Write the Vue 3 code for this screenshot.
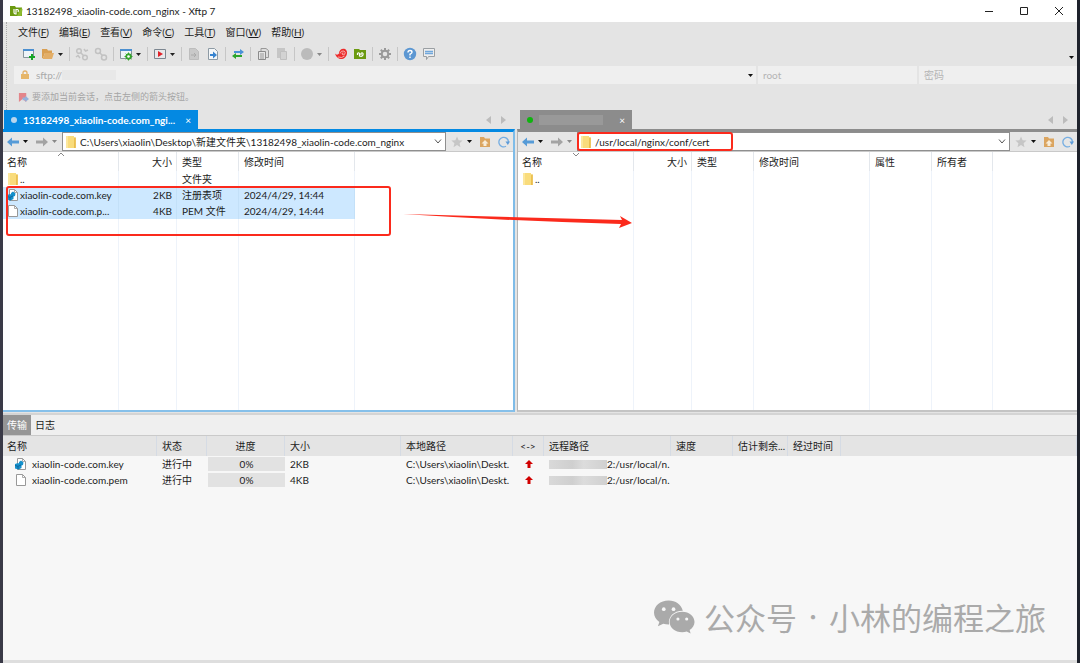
<script setup>
const menus = [
  ['文件', 'F'], ['编辑', 'E'], ['查看', 'V'], ['命令', 'C'],
  ['工具', 'T'], ['窗口', 'W'], ['帮助', 'H'],
]

const tools = [
  'new', 'open', 'caret', 'sep', 'link', 'unlink', 'sep', 'props', 'caret', 'sep',
  'run', 'caret', 'sep', 'doc', 'docGo', 'sep', 'swap', 'sep', 'copy', 'paste', 'sep',
  'globe', 'caretOff', 'sep', 'xshell', 'xftp', 'sep', 'gear', 'sep', 'help', 'chat',
]

const toolLabels = {
  new: '新建', open: '打开', caret: '更多', caretOff: '更多', link: '连接', unlink: '断开',
  props: '属性', run: '运行', doc: '文件', docGo: '传输文件', swap: '同步', copy: '复制',
  paste: '粘贴', globe: '编码', xshell: 'Xshell', xftp: 'Xftp', gear: '选项', help: '帮助', chat: '反馈',
}

const panes = [
  {
    side: 'local',
    title: '13182498_xiaolin-code.com_ngi...',
    path: 'C:\\Users\\xiaolin\\Desktop\\新建文件夹\\13182498_xiaolin-code.com_nginx',
    columns: ['名称', '大小', '类型', '修改时间'],
    rows: [
      { icon: 'folder', cells: ['..', '', '文件夹', ''] },
      { icon: 'key', selected: true, cells: ['xiaolin-code.com.key', '2KB', '注册表项', '2024/4/29, 14:44'] },
      { icon: 'file', selected: true, cells: ['xiaolin-code.com.p...', '4KB', 'PEM 文件', '2024/4/29, 14:44'] },
    ],
  },
  {
    side: 'remote',
    title: '',
    path: '/usr/local/nginx/conf/cert',
    columns: ['名称', '大小', '类型', '修改时间', '属性', '所有者'],
    rows: [{ icon: 'folder', cells: ['..', '', '', '', '', ''] }],
  },
]

const transferColumns = ['名称', '状态', '进度', '大小', '本地路径', '<->', '远程路径', '速度', '估计剩余...', '经过时间']
const transfers = [
  { icon: 'key', name: 'xiaolin-code.com.key', size: '2KB' },
  { icon: 'file', name: 'xiaolin-code.com.pem', size: '4KB' },
]
</script>

<template>
  <div class="desktop">
    <svg class="defs" aria-hidden="true">
      <symbol id="i-folder" viewBox="0 0 12 14">
        <path d="M1 1h8v1.5h1.5V13H1z" fill="#f9dc7c" />
        <path d="M9.2 2.5h1.6V13H9z" fill="#e9bd4d" />
        <path d="M1 1h2v12H1z" fill="#fce79d" />
      </symbol>
      <symbol id="i-file" viewBox="0 0 12 14">
        <path d="M1.5 1.5h6l3 3v8h-9z" fill="#fff" stroke="#989898" />
        <path d="M7.5 1.5v3h3" fill="none" stroke="#989898" stroke-width=".8" />
      </symbol>
      <symbol id="i-key" viewBox="0 0 12 14">
        <path d="M2.5 1.5h5l3 3v8h-8z" fill="#fff" stroke="#989898" />
        <path d="M7.5 1.5v3h3" fill="none" stroke="#989898" stroke-width=".8" />
        <path d="M0 7l3-1 1 .5V5l2-1.500 2.500 2L8 8 6.500 8.500 6.500 11l-3 1.500-3.500-1z" fill="#1591cc" />
        <path d="M0 8.500l3 .8 3-1.300M3 9.300v3" stroke="#0b5c94" stroke-width=".8" fill="none" />
      </symbol>
    </svg>

    <main class="window">
      <header class="titlebar">
        <svg class="app-icon" viewBox="0 0 14 12">
          <path d="M1 1h5l1 1.500h6V11H1z" fill="#6b9a10" />
          <path d="M12 3l1.500 1-1 7H8z" fill="#8dbb2f" />
          <path d="M5 4v3.500q0 1.500 1.500 1.500H7V4.500h1.500Q10 5 9 7" fill="none" stroke="#fff" stroke-width="1.200" />
        </svg>
        <h1>13182498_xiaolin-code.com_nginx - Xftp 7</h1>
        <div class="caption">
          <button aria-label="最小化"><svg viewBox="0 0 10 10"><path d="M1 5.500h8" /></svg></button>
          <button aria-label="最大化"><svg viewBox="0 0 10 10"><path d="M1.500 1.500h7v7h-7z" /></svg></button>
          <button aria-label="关闭"><svg viewBox="0 0 10 10"><path d="M1 1l8 8M9 1l-8 8" /></svg></button>
        </div>
      </header>

      <section class="chrome">
        <nav class="menubar">
          <button v-for="m in menus" :key="m[1]">{{ m[0] }}(<u>{{ m[1] }}</u>)</button>
        </nav>

        <div class="toolbar">
          <template v-for="(t, i) in tools" :key="i">
            <span v-if="t === 'sep'" class="sep"></span>
            <button v-else :class="t.startsWith('caret') ? 'drop' : 'tool'" :aria-label="toolLabels[t]">
              <svg v-if="t.startsWith('caret')" viewBox="0 0 5 3"><path d="M0 0h5L2.500 3z" :fill="t === 'caret' ? '#222' : '#888'" /></svg>
              <svg v-else-if="t === 'new'" viewBox="0 0 14 14">
                <path d="M1.500 2.500h10v8h-10z" fill="#eef4f8" stroke="#87949c" /><path d="M1 2h11v2H1z" fill="#4b8fd0" />
                <path d="M10 7v6M7 10h6" stroke="#16a524" stroke-width="2" />
              </svg>
              <svg v-else-if="t === 'open'" viewBox="0 0 14 14"><path d="M1 2h5l1 1.500h4V6H4l-2 5-1 0z" fill="#d99f52" /><path d="M4 6h9l-2 6H1.500z" fill="#e3ae67" /></svg>
              <svg v-else-if="t === 'link'" viewBox="0 0 14 14" fill="none" stroke="#c2c2c2" stroke-width="1.500">
                <circle cx="4" cy="4" r="2.300" /><circle cx="10" cy="10.500" r="2.300" /><path d="M5.500 5.500l3 3M9 2l1.500 2L13 3M1 10l2-1.500L5 11" />
              </svg>
              <svg v-else-if="t === 'unlink'" viewBox="0 0 14 14" fill="none" stroke="#c2c2c2" stroke-width="1.500">
                <circle cx="4" cy="4" r="2.500" /><circle cx="10" cy="10.500" r="2.500" /><path d="M5.500 5.500l3 3" />
              </svg>
              <svg v-else-if="t === 'props'" viewBox="0 0 14 14">
                <path d="M1.500 2.500h11v9h-11z" fill="#eef4f8" stroke="#87949c" /><path d="M1 2h12v2H1z" fill="#4b8fd0" />
                <circle cx="9.500" cy="9.500" r="2.300" fill="#eee" stroke="#35a52c" stroke-width="1.700" />
                <path d="M9.500 5.500v8M5.500 9.500h8M6.700 6.700l5.600 5.600M12.300 6.700l-5.600 5.600" stroke="#35a52c" /><circle cx="9.500" cy="9.500" r="1.300" fill="#fff" />
              </svg>
              <svg v-else-if="t === 'run'" viewBox="0 0 14 14"><path d="M1.500 2.500h11v9h-11z" fill="#e8e8ea" stroke="#7c8690" /><path d="M5 4l5 3-5 3z" fill="#e0222a" /></svg>
              <svg v-else-if="t === 'doc'" viewBox="0 0 14 14"><path d="M2.500 1.500h6l3 3v8h-9z" fill="#c9c9c9" stroke="#bdbdbd" /><path d="M4 8h5M7 6l2 2-2 2" stroke="#aaa" fill="none" /></svg>
              <svg v-else-if="t === 'docGo'" viewBox="0 0 14 14"><path d="M2.500 1.500h6l3 3v8h-9z" fill="#f3f6f8" stroke="#8d9aa4" /><path d="M4 7h3V4.500L11 8l-4 3.500V9H4z" fill="#3683cf" /></svg>
              <svg v-else-if="t === 'swap'" viewBox="0 0 14 14"><path d="M3 4h6V2l4 3-4 3V6H3z" fill="#4a92d8" /><path d="M11 8H5V6L1 9l4 3v-2h6z" fill="#2ba52c" /></svg>
              <svg v-else-if="t === 'copy'" viewBox="0 0 14 14"><path d="M5 1.500h5l2.500 2v7H5z" fill="#ddd" stroke="#999" /><path d="M2.500 4.500h7v8h-7z" fill="#e5e5e5" stroke="#8b8b8b" /><path d="M4 7h4M4 9h4M4 11h4" stroke="#999" /></svg>
              <svg v-else-if="t === 'paste'" viewBox="0 0 14 14"><path d="M2 1h8v10H2z" fill="#c6c6c6" /><path d="M5.500 4.500h6v8h-6z" fill="#d3d3d3" stroke="#c0c0c0" /></svg>
              <svg v-else-if="t === 'globe'" viewBox="0 0 14 14"><circle cx="7" cy="7" r="6" fill="#bbb" /></svg>
              <svg v-else-if="t === 'xshell'" viewBox="0 0 14 14">
                <path d="M1 6.500c1 1.500 3 1.500 4 0C5 3 8 1 11 2 14 3.500 13.500 8.500 11 10.500 7.500 13.500 2.500 12 1 6.500z" fill="#ed2b2b" />
                <path d="M9.500 6q-1.500-.5-1.500 1 1 1.500 2.700.3 1.300-2-.7-3.300-3-.8-4 2.500M4 10q4 1.500 6.500-1" stroke="#f7c8c4" stroke-width=".8" fill="none" />
              </svg>
              <svg v-else-if="t === 'xftp'" viewBox="0 0 14 14"><path d="M1 2h5l1 1h6v9H1z" fill="#6b9a10" /><path d="M4.500 8V6.500q1-1.500 2 0V9q2.500 1 3.500-1V6.500q-1-1.500-2 0V8" fill="none" stroke="#fff" stroke-width="1.200" /></svg>
              <svg v-else-if="t === 'gear'" viewBox="0 0 14 14">
                <path d="M7 1v12M1 7h12M2.800 2.800l8.400 8.400M11.200 2.800l-8.400 8.400" stroke="#999" stroke-width="2" /><circle cx="7" cy="7" r="3.300" fill="#e4e4e4" stroke="#999" stroke-width="2" />
              </svg>
              <svg v-else-if="t === 'help'" viewBox="0 0 14 14"><circle cx="7" cy="7" r="6.200" fill="#5c97d2" /><path d="M5 5.500q0-2 2-2t2 1.700q0 1-2 2V8.500M7 9.500v1.500" fill="none" stroke="#fff" stroke-width="1.400" /></svg>
              <svg v-else viewBox="0 0 14 14"><path d="M1.500 1.500h11v8h-6l-2 3v-3h-3z" fill="#eee" stroke="#9a9fa3" /><path d="M3 4.500h8M3 6.500h8" stroke="#70a7dc" stroke-width="1.400" /></svg>
            </button>
          </template>
          <button class="drop overflow" aria-label="工具栏选项"><svg viewBox="0 0 5 3"><path d="M0 0h5L2.500 3z" fill="#111" /></svg></button>
        </div>

        <form class="address" @submit.prevent>
          <div class="host">
            <svg class="lock" viewBox="0 0 10 10"><path d="M3 5V3q0-2 2-2t2 2v2" fill="none" stroke="#e2b069" stroke-width="1.300" /><path d="M1 4h8v5H1z" fill="#e6b568" /></svg>
            <input aria-label="主机" value="sftp://" />
            <i class="smudge host-smudge"></i>
            <button class="drop" aria-label="主机列表"><svg viewBox="0 0 5 3"><path d="M0 0h5L2.500 3z" fill="#111" /></svg></button>
          </div>
          <input class="user" aria-label="用户名" placeholder="root" />
          <input class="pass" type="password" aria-label="密码" placeholder="密码" />
        </form>

        <p class="hint">
          <svg viewBox="0 0 12 12"><path d="M1 1h8v10L5 7.500 1 11z" fill="#e3858a" /><path d="M5 6h3V4l4 3.500L8 11V9H5z" fill="#93b3dd" /></svg>
          要添加当前会话，点击左侧的箭头按钮。
        </p>
      </section>

      <section class="panes">
        <article v-for="p in panes" :key="p.side" class="pane" :class="p.side">
          <div class="tabs">
            <div class="tab">
              <i class="dot"></i>
              <span v-if="p.title" class="tab-title">{{ p.title }}</span>
              <i v-else class="smudge tab-smudge"></i>
              <button aria-label="关闭标签">×</button>
            </div>
            <div class="scroll">
              <button aria-label="向左"><svg viewBox="0 0 5 8"><path d="M5 0v8L0 4z" /></svg></button>
              <button aria-label="向右"><svg viewBox="0 0 5 8"><path d="M0 0v8l5-4z" /></svg></button>
            </div>
          </div>

          <div class="body">
            <div class="nav">
              <button class="arrow" aria-label="后退"><svg viewBox="0 0 12 10"><path d="M0 5l5-4.500v3h7v3H5v3z" fill="#569bd7" /></svg></button>
              <button class="drop" aria-label="后退历史"><svg viewBox="0 0 5 3"><path d="M0 0h5L2.500 3z" fill="#111" /></svg></button>
              <button class="arrow" aria-label="前进"><svg viewBox="0 0 12 10"><path d="M12 5L7 .5v3H0v3h7v3z" fill="#a3a3a3" /></svg></button>
              <button class="drop" aria-label="前进历史"><svg viewBox="0 0 5 3"><path d="M0 0h5L2.500 3z" fill="#888" /></svg></button>
              <div class="path">
                <svg class="ficon"><use href="#i-folder" /></svg>
                <input :value="p.path" aria-label="路径" />
                <button aria-label="路径列表"><svg viewBox="0 0 8 5"><path d="M1 .5l3 3.500L7 .5" fill="none" stroke="#555" /></svg></button>
                <i v-if="p.side === 'remote'" class="mark path-mark"></i>
              </div>
              <div class="nav-end">
                <button aria-label="收藏"><svg viewBox="0 0 12 12"><path d="M6 .5l1.600 3.700 4 .3-3 2.700.9 4L6 9l-3.500 2.200.9-4-3-2.700 4-.3z" fill="#c6c6c6" /></svg></button>
                <button class="drop" aria-label="收藏列表"><svg viewBox="0 0 5 3"><path d="M0 0h5L2.500 3z" fill="#111" /></svg></button>
                <button class="up" aria-label="上级目录"><svg viewBox="0 0 12 12"><path d="M1 1h4l1 1.500h5V11H1z" fill="#dba560" /><path d="M6 4l3.500 3.500H7.500V10h-3V7.500h-2z" fill="#f8ecd8" /></svg></button>
                <button aria-label="刷新"><svg viewBox="0 0 12 12"><path d="M8 10.300A4.800 4.800 0 1 1 10.500 6" fill="none" stroke="#76aee2" stroke-width="1.300" /><path d="M7.500 5.500h4.500L9.800 9z" fill="#5d9bd8" /></svg></button>
              </div>
            </div>

            <div class="list">
              <table :class="p.side">
                <colgroup><col v-for="(c, i) in p.columns" :key="c" :class="'c' + i" /></colgroup>
                <thead><tr><th v-for="c in p.columns" :key="c">{{ c }}</th></tr></thead>
                <tbody>
                  <tr v-for="r in p.rows" :key="r.cells[0]" :class="{ selected: r.selected }">
                    <td v-for="(c, i) in r.cells" :key="i">
                      <span v-if="i === 0" class="name"><svg class="ficon"><use :href="'#i-' + r.icon" /></svg>{{ c }}</span>
                      <template v-else>{{ c }}</template>
                    </td>
                  </tr>
                  <tr class="rest"><td v-for="c in p.columns" :key="c"></td></tr>
                </tbody>
              </table>
              <svg class="sort" viewBox="0 0 8 5"><path :d="p.side === 'local' ? 'M1 4l3-3 3 3' : 'M1 1l3 3 3-3'" /></svg>
              <i v-if="p.side === 'local'" class="mark files-mark"></i>
            </div>
          </div>
        </article>
        <svg class="pointer" viewBox="0 0 230 20"><path d="M0 4l219 6-2-4 12 7-13 5 2-4q-110-3-218-10z" fill="#fb2a1c" /></svg>
      </section>

      <section class="transfer">
        <div class="switch"><button class="on">传输</button><button>日志</button></div>
        <table>
          <colgroup><col v-for="(c, i) in transferColumns" :key="c" :class="'t' + i" /><col /></colgroup>
          <thead><tr><th v-for="c in transferColumns" :key="c">{{ c }}</th><th></th></tr></thead>
          <tbody>
            <tr v-for="t in transfers" :key="t.name">
              <td><span class="name"><svg class="ficon"><use :href="'#i-' + t.icon" /></svg>{{ t.name }}</span></td>
              <td>进行中</td>
              <td class="bar"><div>0%</div></td>
              <td>{{ t.size }}</td>
              <td>C:\Users\xiaolin\Deskt.</td>
              <td class="dir"><svg viewBox="0 0 8 8"><path d="M4 0l4 4H5.500v4h-3V4H0z" fill="#d10000" /></svg></td>
              <td><span class="remote-path"><i class="smudge"></i>2:/usr/local/n.</span></td>
              <td></td><td></td><td></td><td></td>
            </tr>
          </tbody>
        </table>
        <div class="watermark">
          <svg viewBox="0 0 42 34">
            <path d="M15 0C6.500 0 0 5.500 0 12.500c0 4 2 7.300 5.500 9.500L4 26.500l5.500-2.700q3 .9 6 .8C14 17 20 10.500 29.500 10.500 28 4 22 0 15 0z" fill="#aaa" />
            <path d="M29 11.500c-7.500 0-13 4.700-13 10.500s5.500 10.500 13 10.500q2.300 0 4.500-.7l4 2-1-3.500c3-2 5-5 5-8.300 0-5.800-5.500-10.500-12.500-10.500z" fill="#aaa" />
            <g fill="#f7f7f7"><circle cx="10" cy="9" r="1.900" /><circle cx="20" cy="9" r="1.900" /><circle cx="24.500" cy="19" r="1.600" /><circle cx="33.500" cy="19" r="1.600" /></g>
          </svg>
          <span>公众号</span><span class="mid">·</span><span>小林的编程之旅</span>
        </div>
      </section>
    </main>
  </div>
</template>

<style>
body { margin: 0; background: #3a3a47; }
</style>

<style scoped>
* { box-sizing: border-box; }
.desktop {
  min-height: 100vh; display: flex; padding: 0 3px;
  background: linear-gradient(90deg, #3a3a47 50%, #1e222c 50%);
  font: 10px/14px Lato, "Noto Sans CJK SC", sans-serif; color: #1c1c1c;
}
.defs { position: absolute; width: 0; height: 0; }
button { border: 0; padding: 0; margin: 0; background: none; font: inherit; color: inherit; display: flex; align-items: center; justify-content: center; }
input { border: 0; padding: 0; margin: 0; background: none; font: inherit; color: inherit; min-width: 0; outline: 0; }
svg { display: block; }
.window { flex: 1; min-width: 0; display: flex; flex-direction: column; background: #e4e4e4; border-bottom: 3px solid #dedede; }

.titlebar { height: 22px; background: #fff; display: flex; align-items: center; padding-left: 6px; }
.app-icon { width: 14px; height: 12px; margin-right: 3px; }
h1 { margin: 0; font-size: 10px; font-weight: 400; }
.caption { margin-left: auto; display: flex; padding-right: 1px; }
.caption button { width: 35px; height: 20px; }
.caption svg { width: 10px; height: 10px; fill: none; stroke: #222; }

.chrome { margin-left: 3px; border-left: 1px dotted #aaa; padding-left: 7px; }
.menubar { display: flex; height: 20px; gap: 10px; padding-left: 4px; }
.toolbar { display: flex; height: 24px; align-items: center; padding-left: 5px; }
.tool { width: 19px; height: 20px; }
.tool svg { width: 14px; height: 14px; }
.drop { width: 9px; height: 18px; flex: none; justify-content: flex-start; padding-left: 1px; }
.drop svg { width: 5px; height: 3px; }
.sep { width: 6px; height: 14px; background: linear-gradient(#c6c6c6, #c6c6c6) center / 1px 100% no-repeat; }
.overflow { margin-left: auto; align-self: flex-end; }

.address { display: flex; height: 18px; gap: 2px; color: #aaa; }
.address > * { background: #efefef; }
.host { flex: 1; display: flex; align-items: center; padding-left: 6px; }
.lock { width: 10px; height: 10px; margin-right: 6px; }
.host input { width: 26px; }
.host .drop { margin-left: auto; }
.user { width: 159px; padding-left: 5px; }
.pass { width: 158px; padding-left: 5px; }
input::placeholder { color: #b4b4b4; opacity: 1; }
.smudge { display: block; background: linear-gradient(90deg, #d9d9d9, #cfcfcf 40%, #dcdcdc 60%, #d0d0d0); }
.host-smudge { width: 54px; height: 10px; background: #e8e8e8; }
.hint { margin: 0; height: 26px; display: flex; align-items: center; gap: 3px; padding-left: 4px; color: #a5a5a5; font-size: 9px; }
.hint svg { width: 11px; height: 11px; }

.panes { flex: 1; display: grid; grid-template-columns: 512fr 560fr; gap: 2px; position: relative; padding-bottom: 1px; }
.pane { display: flex; flex-direction: column; min-width: 0; }
.tabs { height: 19px; display: flex; padding-left: 1px; }
.remote .tabs { padding-left: 3px; }
.tab { display: flex; align-items: center; width: 194px; background: #0489e2; color: #fff; font-weight: 700; padding: 0 7px; }
.tab-title { white-space: nowrap; }
.remote .tab { width: 112px; background: #8c8c8c; }
.dot { width: 6px; height: 6px; border-radius: 50%; background: #b9d6ee; margin-right: 6px; flex: none; }
.remote .dot { background: #0eb40e; }
.tab-smudge { width: 64px; height: 10px; background: #999; }
.tab button { margin-left: auto; font-weight: 400; }
.scroll { margin-left: auto; display: flex; align-items: center; gap: 10px; padding-right: 9px; }
.scroll svg { width: 5px; height: 8px; fill: #bcbcbc; }
.body { flex: 1; display: flex; flex-direction: column; border-top: 3px solid #0489e2; border-right: 2px solid #7fbce8; border-bottom: 2px solid #86c0ea; }
.remote .body { border-top-color: #8c8c8c; border-right: 0; border-left: 1px solid #b5b5b5; border-bottom-color: #c4c4c4; }
.nav { height: 20px; display: flex; align-items: center; background: #e6e6e6; padding: 0 3px 0 4px; border-bottom: 1px solid #c9c9c9; }
.arrow { width: 15px; justify-content: flex-start; }
.arrow svg { width: 12px; height: 10px; }
.nav > .drop { width: 14px; }
.nav > .drop:nth-child(4) { width: 11px; }
.path { flex: 1; min-width: 0; height: 19px; position: relative; display: flex; align-items: center; background: #fff; border: 1px solid #8f8f8f; padding-left: 2px; }
.path input { flex: 1; padding-left: 3px; }
.path button { width: 14px; height: 16px; }
.path button svg { width: 8px; height: 5px; }
.ficon { width: 12px; height: 14px; flex: none; }
.nav-end { display: flex; align-items: center; padding-left: 5px; }
.nav-end svg { width: 12px; height: 12px; }
.nav-end .drop { padding-left: 4px; width: 16px; }
.nav-end .drop svg { width: 5px; height: 3px; }
.up { margin-right: 7px; }

.list { flex: 1; display: flex; background: #fff; position: relative; }
table { border-collapse: separate; border-spacing: 0; table-layout: fixed; }
th, td { padding: 0 0 0 5px; text-align: left; font-weight: 400; white-space: nowrap; overflow: hidden; }
.list table { width: 352px; }
.list table.remote { width: 475px; }
.list th, .list td { border-right: 1px solid #eef3fa; }
.list th { height: 19px; border-right-color: #e3e7ec; }
.list tbody tr { height: 16px; }
.list tbody .rest { height: auto; }
.list th:first-child, .list td:first-child { padding-left: 4px; }
.list th:nth-child(2), .list td:nth-child(2) { text-align: right; padding-right: 4px; }
.selected td { background: #cde8ff; border-right-color: #c3e0f8; }
.c0 { width: 116px; } .c1 { width: 58px; } .c2 { width: 62px; } .c3 { width: 116px; } .c4 { width: 62px; } .c5 { width: 61px; }
.name { display: flex; align-items: center; gap: 1px; }
.sort { position: absolute; left: 54px; top: 0; width: 8px; height: 5px; fill: none; stroke: #888; }
.mark { position: absolute; border: 2px solid #fb2a1c; border-radius: 3px; }
.path-mark { left: -1px; top: -1px; width: 156px; height: 19px; }
.files-mark { left: 3px; top: 34px; width: 385px; height: 50px; }
.pointer { position: absolute; left: 400px; top: 100px; width: 230px; height: 20px; }

.transfer { height: 247px; background: #f7f7f7; border-top: 2px solid #d4d4d4; position: relative; }
.switch { display: flex; height: 21px; background: #efefef; border-bottom: 1px solid #cacaca; }
.switch button { width: 28px; }
.switch .on { background: #959595; color: #fff; }
.transfer table { width: 100%; }
.transfer th { height: 20px; background: #e4e4e4; border-right: 1px solid #d5dbe4; }
.transfer th:first-child { padding-left: 4px; }
.transfer th:nth-child(3), .transfer th:nth-child(6) { text-align: center; padding: 0; }
.transfer tbody tr { height: 16px; }
.transfer td:first-child { padding-left: 12px; }
.transfer .name { gap: 5px; }
.transfer .bar { padding: 0 0 0 1px; }
.bar div { background: #e2e2e2; text-align: center; height: 14px; }
.dir svg { width: 8px; height: 8px; margin-left: 7px; }
.remote-path { display: flex; align-items: center; }
.remote-path .smudge { width: 58px; height: 9px; }
.t0 { width: 154px; } .t1 { width: 50px; } .t2 { width: 78px; } .t3 { width: 116px; } .t4 { width: 112px; }
.t5 { width: 31px; } .t6 { width: 127px; } .t7 { width: 62px; } .t8 { width: 55px; } .t9 { width: 53px; }
.watermark { position: absolute; right: 31px; bottom: 20px; display: flex; align-items: center; color: #aaa; font: 31px/46px "Noto Sans CJK SC", sans-serif; }
.watermark svg { width: 41px; height: 34px; margin-right: 9px; }
.mid { width: 32px; text-align: center; font-size: 20px; }
</style>
